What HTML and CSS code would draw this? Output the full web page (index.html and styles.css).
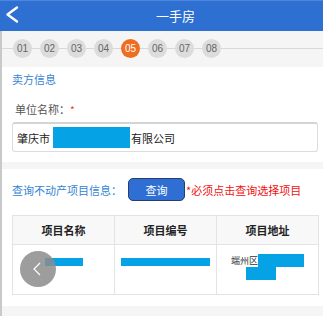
FILE: index.html
```html
<!DOCTYPE html>
<html lang="zh">
<head>
<meta charset="utf-8">
<title>一手房</title>
<link rel="stylesheet" href="styles.css">
</head>
<body>
<header class="topbar">
  <span class="back">
    <svg width="24" height="31" viewBox="0 0 24 31"><polyline points="17,7.5 7.5,14.5 17,21.5" fill="none" stroke="#fff" stroke-width="2.4" stroke-linecap="round" stroke-linejoin="round"/></svg>
  </span>
  <h1 class="title">一手房</h1>
</header>
<main class="content">
  <nav class="steps">
    <span class="step">01</span>
    <span class="step">02</span>
    <span class="step">03</span>
    <span class="step">04</span>
    <span class="step active">05</span>
    <span class="step">06</span>
    <span class="step">07</span>
    <span class="step">08</span>
  </nav>
  <section class="panel panel-seller">
    <div class="panel-title">卖方信息</div>
    <div class="field-label">单位名称：<span class="req">*</span></div>
    <div class="input">肇庆市<span class="mask mask-input"></span>有限公司</div>
  </section>
  <section class="panel panel-query">
    <div class="query-row">
      <span class="query-label">查询不动产项目信息：</span>
      <button class="btn">查询</button>
      <span class="warn">*必须点击查询选择项目</span>
    </div>
    <table class="grid">
      <thead>
        <tr><th>项目名称</th><th>项目编号</th><th>项目地址</th></tr>
      </thead>
      <tbody>
        <tr>
          <td><span class="mask mask-name"></span></td>
          <td><span class="mask mask-code"></span></td>
          <td><span class="addr">端州区<span class="mask mask-a1"></span><br><span class="mask mask-a2"></span></span></td>
        </tr>
      </tbody>
    </table>
  </section>
  <div class="float-back">
    <svg width="36" height="36" viewBox="0 0 36 36"><polyline points="20,12 14,18 20,24" fill="none" stroke="#fff" stroke-width="1.2"/></svg>
  </div>
</main>
</body>
</html>
```
FILE: styles.css
```css
* { box-sizing: border-box; }
html, body { margin: 0; padding: 0; }
body {
  font-family: "Noto Sans CJK SC", "Noto Sans", sans-serif;
  background: #f5f5f5;
  width: 323px;
  height: 316px;
  overflow: hidden;
}
.topbar {
  height: 31px;
  background: #2e6fd2;
  border-top: 1px solid #4d86dc;
  display: flex;
  align-items: center;
  color: #fff;
}
.back { width: 30px; height: 30px; display: flex; align-items: center; }
.back svg { display: block; margin-top: -1px; }
.title {
  flex: 1;
  margin: 0;
  text-align: center;
  font-size: 13px;
  font-weight: normal;
  line-height: 30px;
  padding-right: 2px;
}
.content {
  border-left: 2px solid #c9c9c9;
  min-height: 285px;
  position: relative;
}
.steps {
  height: 36px;
  display: flex;
  gap: 8px;
  padding: 8px 0 0 11px;
  background: #f5f5f5 linear-gradient(#d9d9d9, #d9d9d9) no-repeat 0 17px / 100% 1px;
}
.step {
  width: 19px;
  height: 19px;
  border-radius: 50%;
  background: #dcdcdc;
  color: #666;
  font-family: "Liberation Sans", Arial, sans-serif;
  font-size: 10px;
  line-height: 19px;
  text-align: center;
}
.step.active { background: #ef6d22; color: #fff; }
.panel { background: #fff; }
.panel-seller { padding: 3px 5px 10px 10px; margin-bottom: 7px; }
.panel-title { color: #3585d4; font-size: 11px; line-height: 18px; }
.field-label { color: #555; font-size: 11px; line-height: 16px; margin: 13px 0 4px 3px; }
.req { color: #e33; font-size: 10px; }
.input {
  height: 30px;
  border: 1px solid #dcdcdc;
  border-top: 2px solid #d4d4d4;
  border-radius: 3px;
  padding: 0 4px;
  font-size: 11px;
  color: #222;
  display: flex;
  align-items: center;
}
.mask { display: inline-block; background: #06a2e6; vertical-align: middle; }
.mask-input { width: 77px; height: 21px; margin: 0 1px 0 3px; }
.panel-query { padding: 9px 4px 11px 10px; }
.query-row { display: flex; align-items: center; height: 23px; font-size: 11px; }
.query-label { color: #3585d4; }
.btn {
  margin-left: 6px;
  width: 57px;
  height: 23px;
  background: #2f6fd4;
  border: 1px solid #283f6e;
  border-radius: 5px;
  color: #fff;
  font-family: inherit;
  font-size: 11px;
  padding: 0;
}
.warn { color: #f01010; margin-left: 1px; }
.grid {
  margin-top: 14px;
  width: 307px;
  border-collapse: collapse;
  table-layout: fixed;
  border: 1px solid #e3e3e3;
}
.grid th, .grid td { border: 1px solid #e3e3e3; }
.grid th {
  background: #f8f8f8;
  font-size: 11px;
  font-weight: bold;
  color: #222;
  height: 29px;
  padding: 0;
}
.grid td {
  height: 50px;
  vertical-align: top;
  text-align: center;
  padding: 9px 0 0;
  font-size: 9px;
  line-height: 13px;
  color: #333;
}
.mask-name { width: 38px; height: 8px; margin-top: 1px; }
.mask-code { width: 89px; height: 8px; margin-top: 1px; }
.mask-a1 { width: 46px; height: 13px; vertical-align: top; }
.mask-a2 { width: 30px; height: 13px; vertical-align: top; margin-left: -14px; }
.float-back {
  position: absolute;
  left: 18px;
  top: 220px;
  width: 36px;
  height: 36px;
  border-radius: 50%;
  background: rgba(140, 140, 140, 0.85);
}
.float-back svg { display: block; }
```
